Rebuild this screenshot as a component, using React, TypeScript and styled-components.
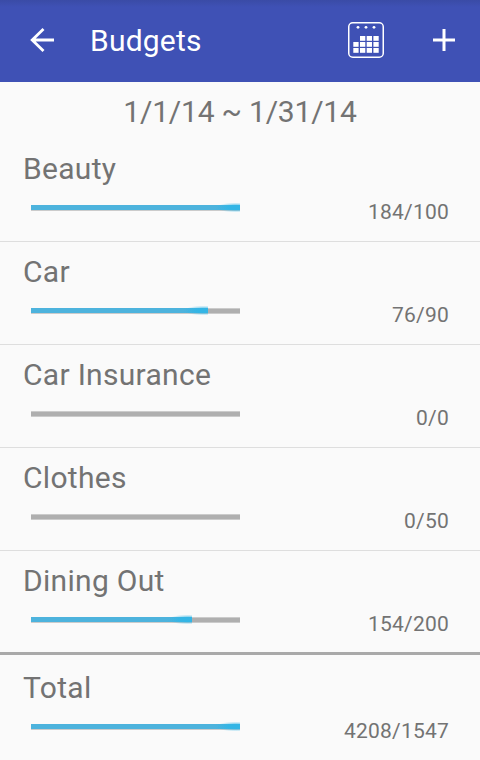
import React from "react";
import styled, { createGlobalStyle } from "styled-components";

const Global = createGlobalStyle`
  * { box-sizing: border-box; }
  body { margin: 0; background: #fafafa; font-family: Roboto, sans-serif; color: #737373; }
`;
const Screen = styled.main`
  width: 480px; height: 760px; overflow: hidden; display: flex; flex-direction: column;
`;
const Toolbar = styled.header`
  height: 82px; flex: none; background: linear-gradient(#3a4ba6 0, #3f51b5 7px);
  color: #fff; display: flex; align-items: center; padding: 0 25px 2px 30px;
  svg { display: block; flex: none; }
`;
const Title = styled.h1`
  margin: 2px auto 0 35px; font-size: 30px; line-height: 36px; font-weight: 400; letter-spacing: 0.2px;
`;
const AddIcon = styled.svg`margin-left: 49px;`;
const Period = styled.div`
  height: 57px; flex: none; text-align: center; font-size: 30px; line-height: 59px; letter-spacing: -0.2px;
`;
const Row = styled.section<{ $total?: boolean }>`
  height: ${(p) => (p.$total ? 108 : 103)}px; flex: none; padding: ${(p) => (p.$total ? 15 : 12)}px 31px 0 23px;
  ${(p) => (p.$total ? "border-top: 3px solid #a9a9a9" : "border-bottom: 1px solid #dedede")};
`;
const List = styled.div`
  flex: none; height: 513px; overflow: hidden;
  ${Row}:last-child { border-bottom-color: transparent; }
`;
const Name = styled.div`font-size: 30px; line-height: 36px; letter-spacing: 0.3px;`;
const Detail = styled.div`display: flex; justify-content: space-between; padding-left: 8px;`;
const Track = styled.div`
  width: 209px; height: 6px; margin-top: 18px;
  background: #afafaf; border: solid #cbcbcb; border-width: 1px 0;
`;
const Fill = styled.div`
  position: relative; height: 5px; margin-top: -1px;
  background: linear-gradient(90deg, #4db3dd calc(100% - 25px), #33b5e5);
  &::after {
    content: ""; position: absolute; right: 0; top: -2px; width: 22px; height: 9px;
    background: radial-gradient(ellipse 20px 5px at calc(100% - 4px) 50%, #33b5e5 35%, #33b5e566 65%, #33b5e500 100%);
  }
`;
const Amount = styled.div`
  font-size: 21px; line-height: 26px; margin-top: 12px; letter-spacing: 0.2px;
`;

const budgets = [
  { name: "Beauty", spent: 184, limit: 100 },
  { name: "Car", spent: 76, limit: 90 },
  { name: "Car Insurance", spent: 0, limit: 0 },
  { name: "Clothes", spent: 0, limit: 50 },
  { name: "Dining Out", spent: 154, limit: 200 },
];

const calendarDays = [
  [1, 2, 3],
  [0, 1, 2, 3],
  [0, 1, 2, 3],
];

function CalendarIcon() {
  return (
    <svg width="36" height="36" fill="#fff">
      <rect x="0.75" y="0.75" width="34.500" height="34.500" rx="4" fill="none" stroke="#fff" strokeWidth="1.500" />
      {[10, 18, 26].map((x) => <circle key={x} cx={x} cy="5.300" r="1.400" />)}
      {calendarDays.map((days, row) =>
        days.map((day) => (
          <rect key={`${row}-${day}`} x={5.3 + day * 6.7} y={14 + row * 6} width="5.300" height="4.800" />
        )),
      )}
    </svg>
  );
}

function Budget({ name, spent, limit, total }: { name: string; spent: number; limit: number; total?: boolean }) {
  const ratio = limit ? Math.min(1, spent / limit) : 0;
  return (
    <Row $total={total}>
      <Name>{name}</Name>
      <Detail>
        <Track>{ratio > 0 && <Fill style={{ width: Math.ceil(ratio * 209) }} />}</Track>
        <Amount>{spent}/{limit}</Amount>
      </Detail>
    </Row>
  );
}

export default function App() {
  return (
    <Screen>
      <Global />
      <Toolbar>
        <svg width="25" height="24" fill="none" stroke="#fff" strokeWidth="2.800"><path d="M24 12H3M13.500 1 2.200 12l11.300 11" /></svg>
        <Title>Budgets</Title>
        <CalendarIcon />
        <AddIcon width="22" height="22" stroke="#fff" strokeWidth="3"><path d="M11 0v22M0 11h22" /></AddIcon>
      </Toolbar>
      <Period>1/1/14 ~ 1/31/14</Period>
      <List>{budgets.map((b) => <Budget key={b.name} {...b} />)}</List>
      <Budget name="Total" spent={4208} limit={1547} total />
    </Screen>
  );
}
